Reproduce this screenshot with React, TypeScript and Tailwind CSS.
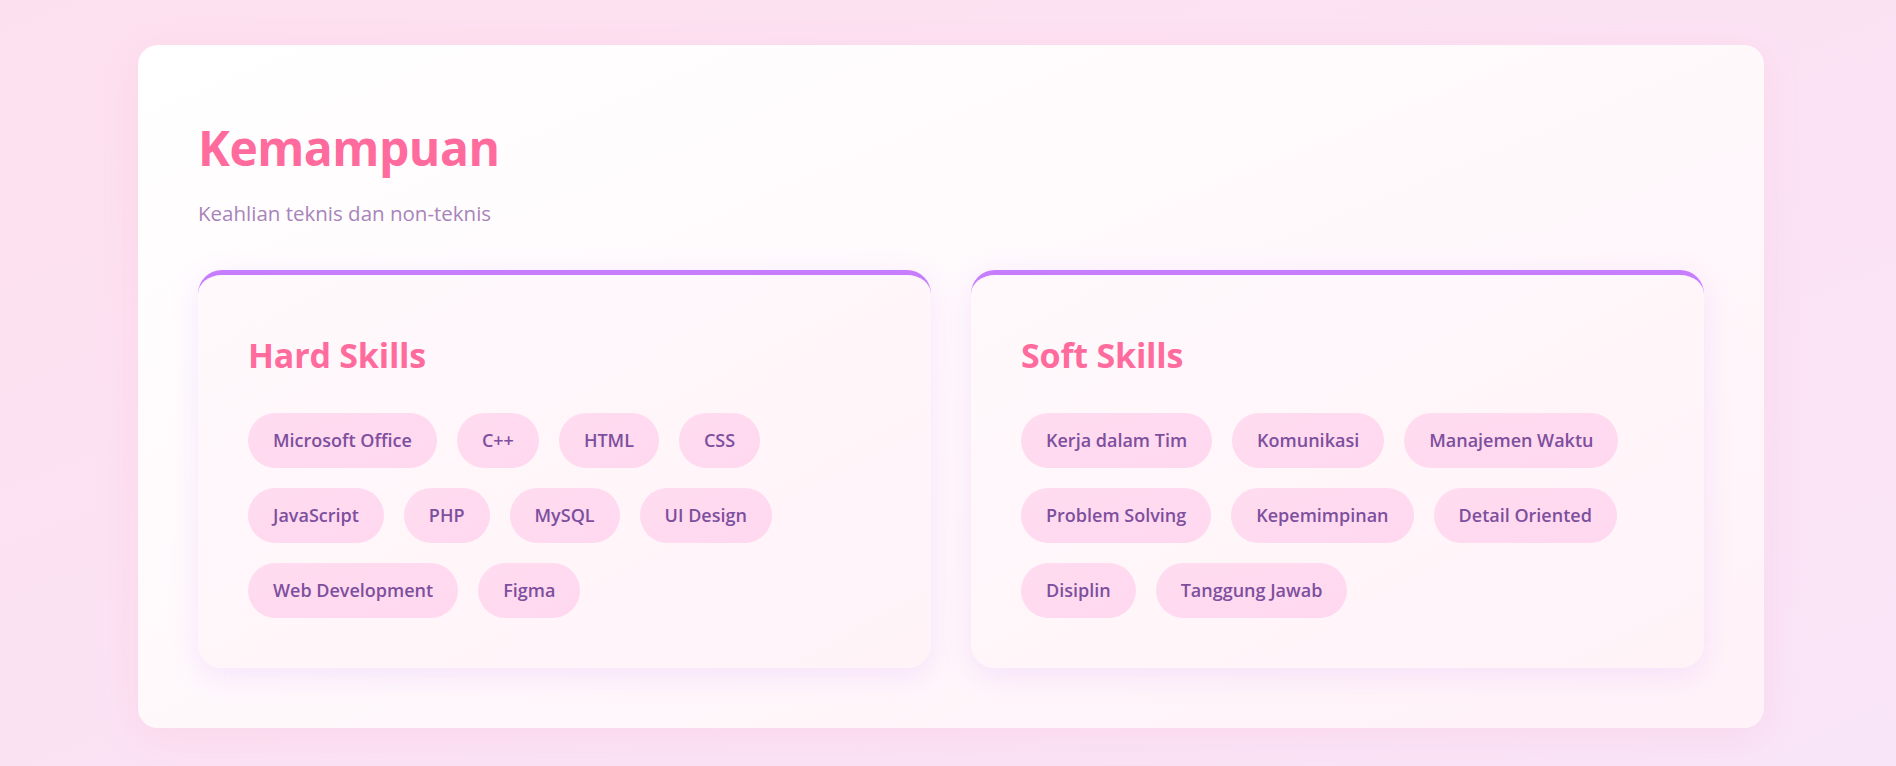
import React from 'react';

const hardSkills = [
  'Microsoft Office',
  'C++',
  'HTML',
  'CSS',
  'JavaScript',
  'PHP',
  'MySQL',
  'UI Design',
  'Web Development',
  'Figma',
];

const softSkills = [
  'Kerja dalam Tim',
  'Komunikasi',
  'Manajemen Waktu',
  'Problem Solving',
  'Kepemimpinan',
  'Detail Oriented',
  'Disiplin',
  'Tanggung Jawab',
];

function SkillCard({ title, skills }: { title: string; skills: string[] }) {
  return (
    <div className="rounded-3xl border-t-[5px] border-[#c77dff] bg-gradient-to-br from-[#fff9fc] to-[#fff3f8] px-[50px] pt-[60px] pb-[50px] shadow-[0_8px_30px_rgba(199,125,255,0.16)]">
      <h3 className="text-[34px] leading-[1.2] font-bold text-[#ff6b9d] tracking-[-0.2px]">{title}</h3>
      <div className="mt-[37px] flex flex-wrap gap-5">
        {skills.map((s) => (
          <span
            key={s}
            className="rounded-full bg-gradient-to-br from-[#ffdcf0] to-[#ffd8ef] px-[25px] py-[13px] text-[18px] leading-[29px] font-semibold text-[#7d4f9e]"
          >
            {s}
          </span>
        ))}
      </div>
    </div>
  );
}

export default function App() {
  return (
    <div
      className="min-h-[766px] bg-gradient-to-br from-[#fde0ef] to-[#f9e5f8] pt-[45px] pb-[37px]"
      style={{ fontFamily: '"Open Sans", "Noto Sans", sans-serif' }}
    >
      <section className="ml-[138px] w-[1626px] rounded-[20px] bg-gradient-to-br from-[#ffffff] to-[#fff2f8] p-[60px] shadow-[0_10px_40px_rgba(255,107,157,0.1)]">
        <h2 className="mt-[14px] text-[48px] leading-[1.2] font-bold text-[#ff6b9d] tracking-[-0.5px]">Kemampuan</h2>
        <p className="mt-[21px] text-[20.5px] leading-[1.5] text-[#a784b9]">Keahlian teknis dan non-teknis</p>
        <div className="mt-[42px] grid grid-cols-2 gap-10">
          <SkillCard title="Hard Skills" skills={hardSkills} />
          <SkillCard title="Soft Skills" skills={softSkills} />
        </div>
      </section>
    </div>
  );
}
